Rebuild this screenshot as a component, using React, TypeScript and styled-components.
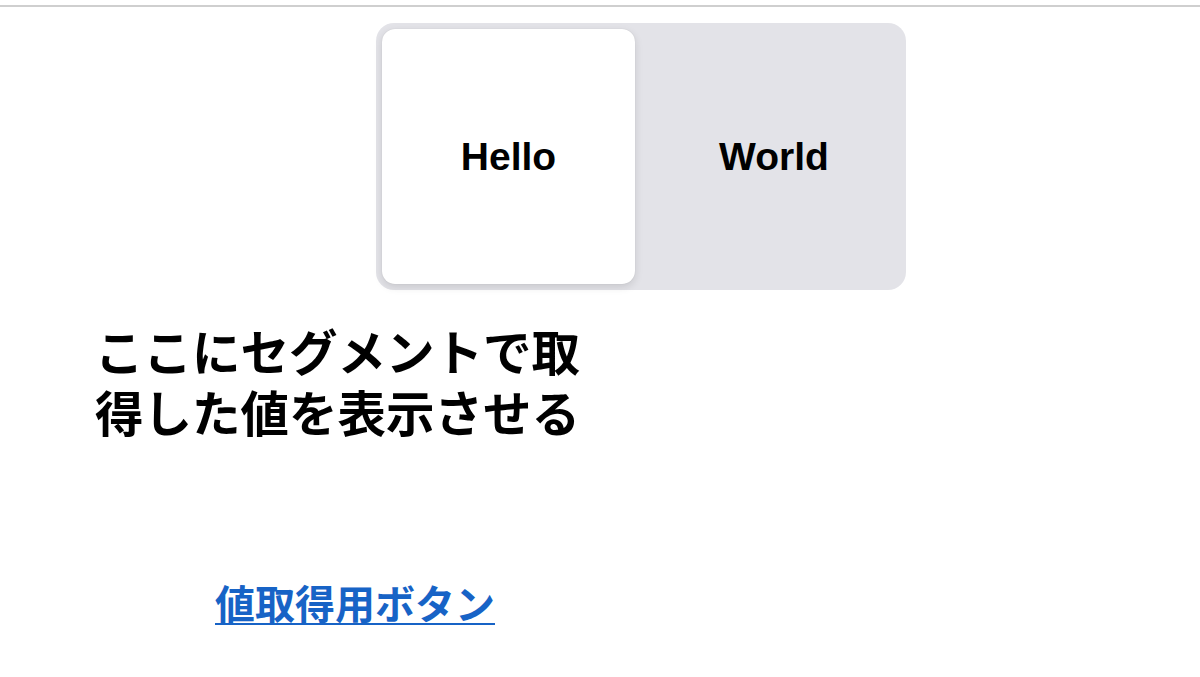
import React, { useState } from 'react';
import styled, { createGlobalStyle } from 'styled-components';

const GlobalStyle = createGlobalStyle`
  html, body {
    margin: 0;
    padding: 0;
    background: #ffffff;
    font-family: 'Liberation Sans', Arial, sans-serif;
  }
`;

const Page = styled.div`
  width: 1200px;
  height: 677px;
  overflow: hidden;
  display: flex;
  flex-direction: column;
  background: #ffffff;
`;

const TopRule = styled.div`
  margin-top: 5px;
  height: 2px;
  background: #cfcfcf;
`;

const ControlRow = styled.div`
  display: flex;
  padding: 16px 0 0 376px;
`;

const SegmentTrack = styled.div`
  width: 530px;
  height: 267px;
  box-sizing: border-box;
  padding: 6px;
  background: #e3e3e8;
  border-radius: 18px;
  display: grid;
  grid-template-columns: 253px 1fr;
  column-gap: 13px;
`;

const Segment = styled.button<{ $active: boolean }>`
  border: none;
  margin: 0;
  padding: 0;
  cursor: pointer;
  display: flex;
  align-items: center;
  justify-content: center;
  border-radius: 13px;
  background: ${(p) => (p.$active ? '#ffffff' : 'transparent')};
  box-shadow: ${(p) =>
    p.$active ? '0 3px 8px rgba(0, 0, 0, 0.12), 0 0 1px rgba(0, 0, 0, 0.15)' : 'none'};
  font-family: 'Liberation Sans', Arial, sans-serif;
  font-weight: 700;
  font-size: 39px;
  color: #000000;
`;

const ValueLabel = styled.div`
  width: 505px;
  margin: 30px 0 0 95px;
  font-family: 'Noto Sans CJK JP', 'Noto Sans', sans-serif;
  font-weight: 700;
  font-size: 48.5px;
  line-height: 61px;
  color: #000000;
`;

const FetchLink = styled.a`
  align-self: flex-start;
  margin: 134px 0 0 215px;
  font-family: 'Noto Sans CJK JP', 'Noto Sans', sans-serif;
  font-weight: 700;
  font-size: 40px;
  line-height: 52px;
  color: #1763c6;
  text-decoration: underline;
  text-decoration-thickness: 2px;
  text-underline-offset: 4px;
  cursor: pointer;
`;

const options = ['Hello', 'World'];

export default function App() {
  const [selected, setSelected] = useState(0);

  return (
    <>
      <GlobalStyle />
      <Page>
        <TopRule />
        <ControlRow>
          <SegmentTrack>
            {options.map((label, i) => (
              <Segment key={label} $active={i === selected} onClick={() => setSelected(i)}>
                {label}
              </Segment>
            ))}
          </SegmentTrack>
        </ControlRow>
        <ValueLabel>ここにセグメントで取得した値を表示させる</ValueLabel>
        <FetchLink>値取得用ボタン</FetchLink>
      </Page>
    </>
  );
}
